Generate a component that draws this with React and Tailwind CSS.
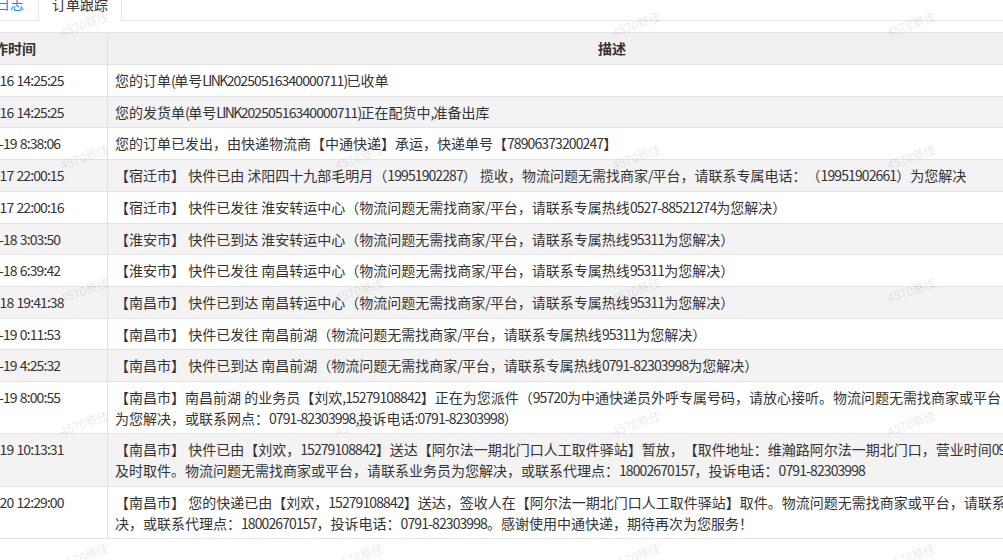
import React from "react";

const rows = [
  ["2025-05-16 14:25:25", ["您的订单(单号LINK20250516340000711)已收单"]],
  ["2025-05-16 14:25:25", ["您的发货单(单号LINK20250516340000711)正在配货中,准备出库"]],
  ["2025-05-19 8:38:06", ["您的订单已发出，由快递物流商【中通快递】承运，快递单号【78906373200247】"]],
  ["2025-05-17 22:00:15", ["【宿迁市】 快件已由 沭阳四十九部毛明月（19951902287） 揽收，物流问题无需找商家/平台，请联系专属电话：（19951902661）为您解决"]],
  ["2025-05-17 22:00:16", ["【宿迁市】 快件已发往 淮安转运中心（物流问题无需找商家/平台，请联系专属热线0527-88521274为您解决）"]],
  ["2025-05-18 3:03:50", ["【淮安市】 快件已到达 淮安转运中心（物流问题无需找商家/平台，请联系专属热线95311为您解决）"]],
  ["2025-05-18 6:39:42", ["【淮安市】 快件已发往 南昌转运中心（物流问题无需找商家/平台，请联系专属热线95311为您解决）"]],
  ["2025-05-18 19:41:38", ["【南昌市】 快件已到达 南昌转运中心（物流问题无需找商家/平台，请联系专属热线95311为您解决）"]],
  ["2025-05-19 0:11:53", ["【南昌市】 快件已发往 南昌前湖（物流问题无需找商家/平台，请联系专属热线95311为您解决）"]],
  ["2025-05-19 4:25:32", ["【南昌市】 快件已到达 南昌前湖（物流问题无需找商家/平台，请联系专属热线0791-82303998为您解决）"]],
  ["2025-05-19 8:00:55", [
    "【南昌市】南昌前湖 的业务员【刘欢,15279108842】正在为您派件（95720为中通快递员外呼专属号码，请放心接听。物流问题无需找商家或平台，请联系业务员",
    "为您解决，或联系网点：0791-82303998,投诉电话:0791-82303998）",
  ]],
  ["2025-05-19 10:13:31", [
    "【南昌市】 快件已由【刘欢，15279108842】送达【阿尔法一期北门口人工取件驿站】暂放，【取件地址：维瀚路阿尔法一期北门口，营业时间09:00-21:00】，请",
    "及时取件。物流问题无需找商家或平台，请联系业务员为您解决，或联系代理点：18002670157，投诉电话：0791-82303998",
  ]],
  ["2025-05-20 12:29:00", [
    "【南昌市】 您的快递已由【刘欢，15279108842】送达，签收人在【阿尔法一期北门口人工取件驿站】取件。物流问题无需找商家或平台，请联系业务员为您解",
    "决，或联系代理点：18002670157，投诉电话：0791-82303998。感谢使用中通快递，期待再次为您服务！",
  ]],
];

const marks = [
  "left-[59px] top-[16px]",
  "left-[611px] top-[16px]",
  "left-[886px] top-[16px]",
  "left-[59px] top-[149px]",
  "left-[334px] top-[149px]",
  "left-[611px] top-[149px]",
  "left-[886px] top-[149px]",
  "left-[59px] top-[282px]",
  "left-[334px] top-[282px]",
  "left-[611px] top-[282px]",
  "left-[886px] top-[282px]",
  "left-[59px] top-[415px]",
  "left-[334px] top-[415px]",
  "left-[611px] top-[415px]",
  "left-[886px] top-[415px]",
  "left-[59px] top-[548px]",
  "left-[334px] top-[548px]",
  "left-[611px] top-[548px]",
  "left-[886px] top-[548px]",
];

// Latin runs are set slightly tighter so they match the narrower latin of the reference font
function Latin({ s }) {
  const parts = s.split(/([A-Z()]+)/);
  return parts.map((p, i) =>
    i % 2 === 1 ? (
      <span key={i} className="tracking-[-1.6px]">{p}</span>
    ) : (
      <span key={i} className="tracking-[-0.9px]">{p}</span>
    )
  );
}

function Txt({ s }) {
  const parts = s.split(/([\x21-\x7e]+)/);
  return parts.map((p, i) =>
    i % 2 === 1 ? (
      <Latin key={i} s={p} />
    ) : (
      <React.Fragment key={i}>{p}</React.Fragment>
    )
  );
}

export default function App() {
  return (
    <div className="relative w-[1003px] h-[560px] overflow-hidden bg-white text-[14px] text-[#333] [text-spacing-trim:space-all] font-['Microsoft_YaHei','Noto_Sans_CJK_SC',sans-serif]">
      {/* tabs */}
      <div className="-mt-[13px] -ml-[18px] flex h-[34px] items-start border-b border-[#e6e6e6] leading-[33px]">
        <div className="h-[33px] border-x border-transparent px-[13px] text-[#1e88e5] whitespace-nowrap">日志</div>
        <div className="h-[34px] border-x border-t border-[#e6e6e6] bg-white px-[13px] whitespace-nowrap">订单跟踪</div>
      </div>

      {/* table */}
      <div className="mt-[11px] -ml-[91px] w-[1207px] border-t border-[#e2e2e2]">
        <div className="grid grid-cols-[199px_1fr] border-b border-[#e2e2e2] bg-[#f0f0f0] font-bold leading-[21px]">
          <div className="border-r border-[#e2e2e2] py-[5px] text-center whitespace-nowrap">操作时间</div>
          <div className="py-[5px] text-center">描述</div>
        </div>
        {rows.map(([time, lines], i) => (
          <div
            key={i}
            className={`grid grid-cols-[199px_1fr] border-b border-[#e2e2e2] leading-[20.7px] ${i % 2 === 1 ? "bg-[#f3f3f3]" : "bg-white"}`}
          >
            <div className="border-r border-[#e2e2e2] py-[5px] pr-[2px] text-center whitespace-nowrap">
              <Txt s={time} />
            </div>
            <div className="py-[5px] pl-[7px] flex flex-col">
              {lines.map((l, j) => (
                <span key={j} className="whitespace-nowrap">
                  <Txt s={l} />
                </span>
              ))}
            </div>
          </div>
        ))}
      </div>

      {/* watermarks */}
      {marks.map((m, i) => (
        <div
          key={i}
          className={`pointer-events-none absolute ${m} -rotate-[20deg] text-[12px] leading-[16px] text-black/[0.1] whitespace-nowrap`}
        >
          4570蔡佳
        </div>
      ))}
    </div>
  );
}
